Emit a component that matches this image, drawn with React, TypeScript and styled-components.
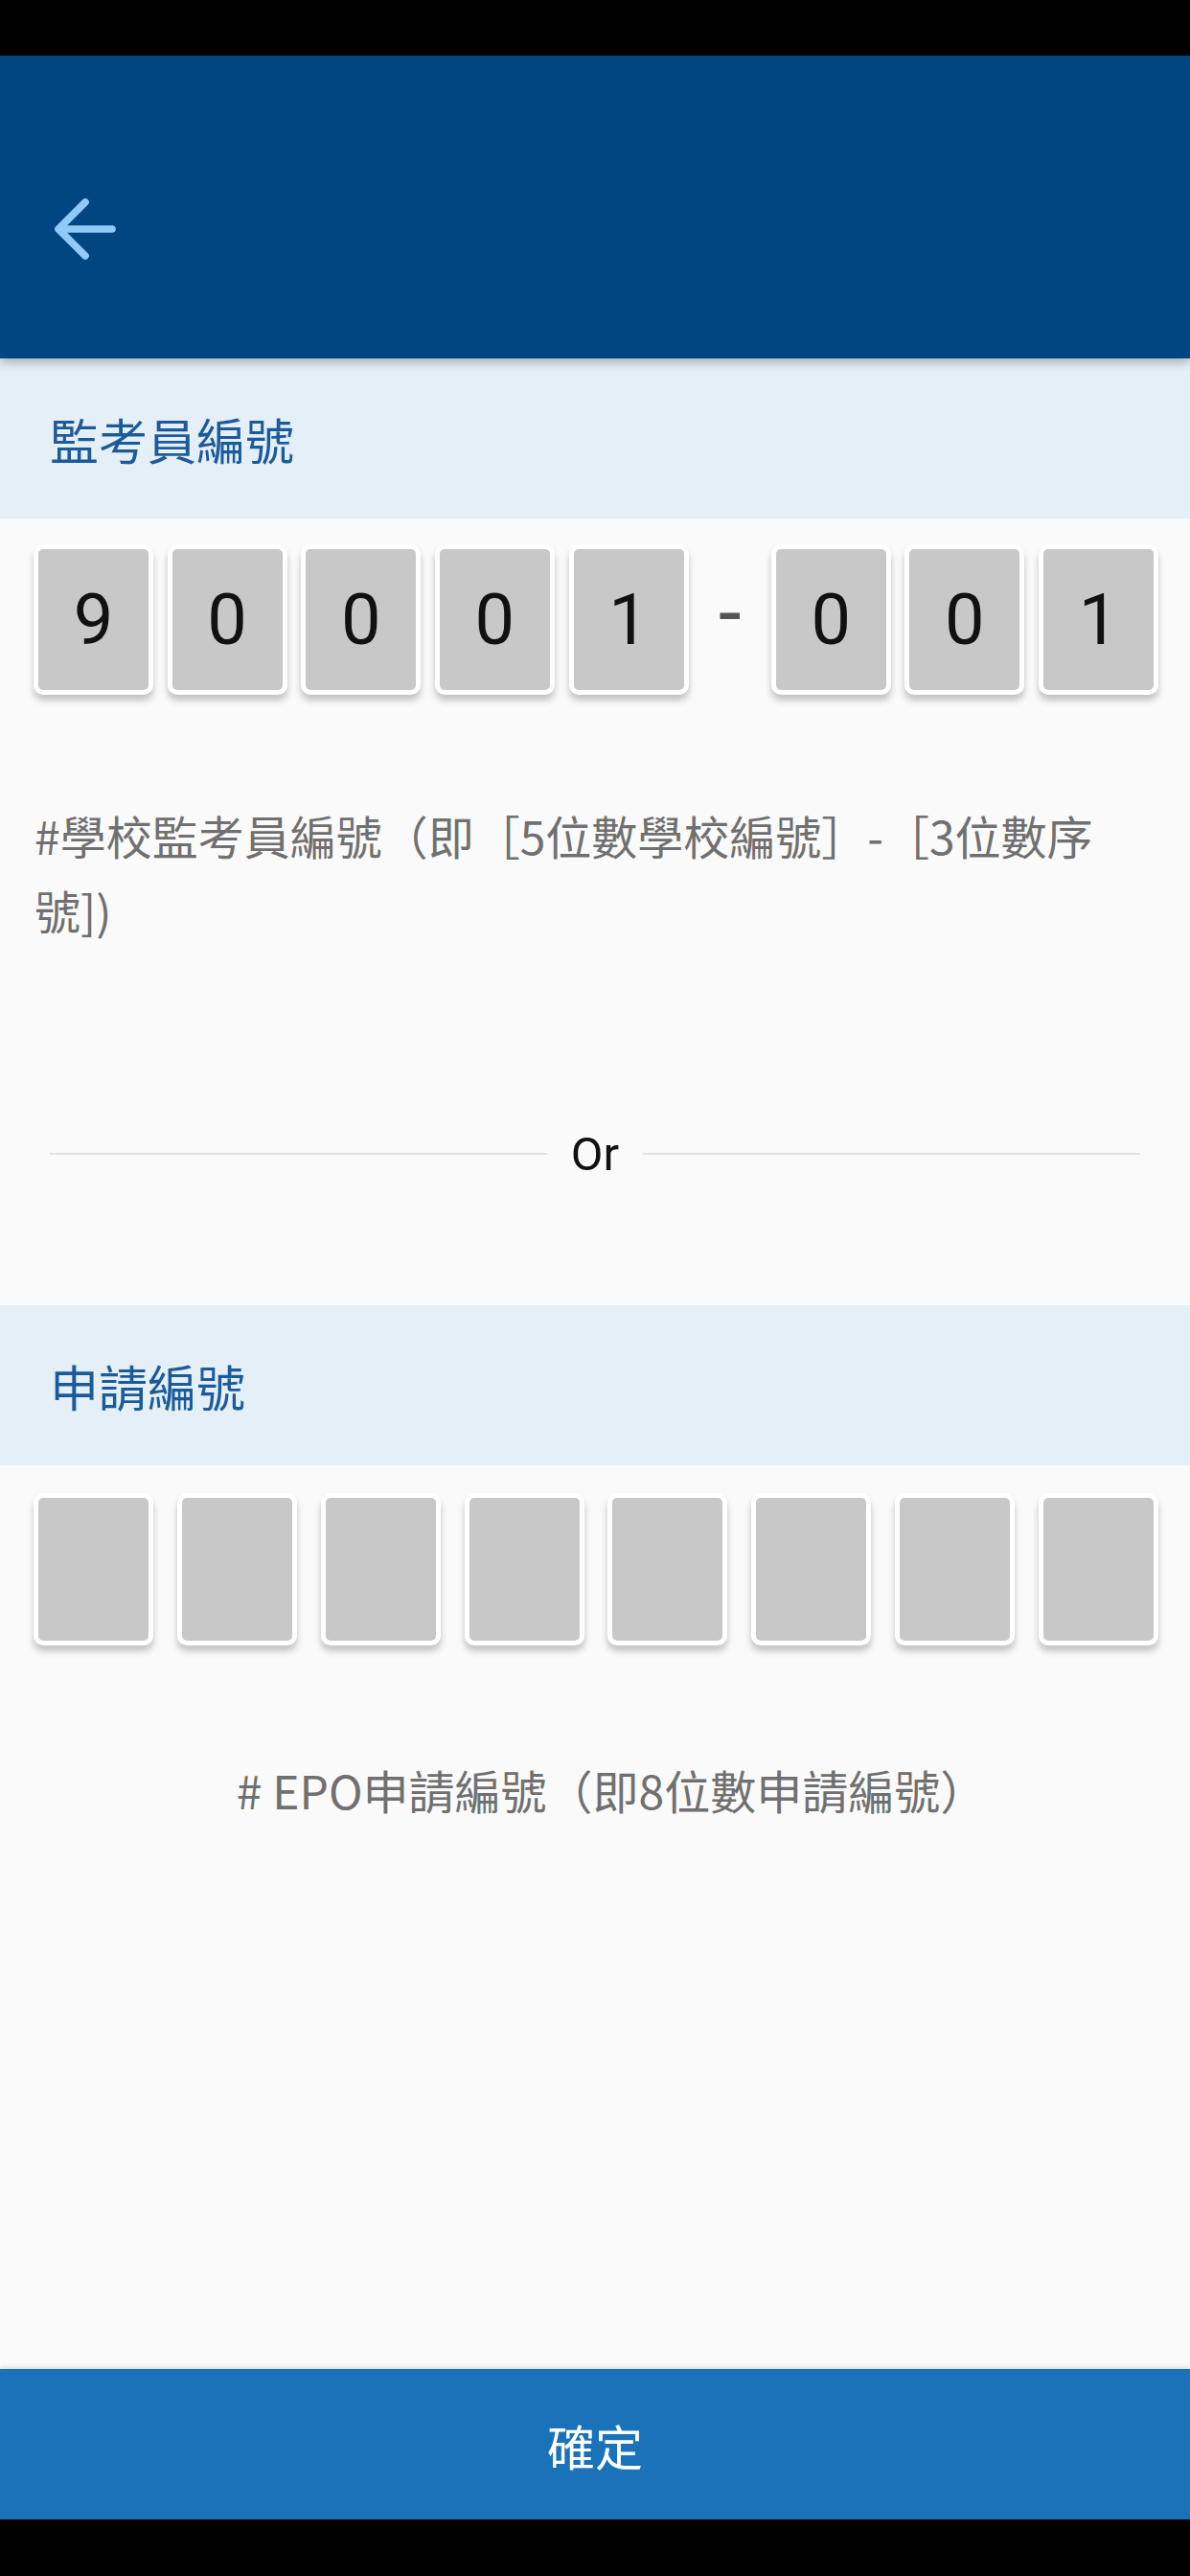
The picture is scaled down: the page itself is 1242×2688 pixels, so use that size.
import React from "react";
import styled, { createGlobalStyle } from "styled-components";

const GlobalStyle = createGlobalStyle`
  html, body {
    margin: 0;
    padding: 0;
    background: #fafafa;
  }
  * { box-sizing: border-box; }
  body {
    font-family: "Noto Sans CJK TC", "Noto Sans", sans-serif;
  }
`;

const Page = styled.div`
  width: 1242px;
  min-height: 2688px;
  display: flex;
  flex-direction: column;
  background: #fafafa;
`;

const StatusBar = styled.div`
  height: 58px;
  background: #000;
  flex-shrink: 0;
`;

const Header = styled.header`
  height: 316px;
  background: #014581;
  padding: 133px 0 0 41px;
  flex-shrink: 0;
  position: relative;
  z-index: 2;
  box-shadow: 0 4px 10px rgba(0, 0, 0, 0.28);
`;

const BackButton = styled.button`
  width: 96px;
  height: 96px;
  padding: 0;
  border: none;
  background: transparent;
  display: flex;
  align-items: center;
  justify-content: center;
  cursor: pointer;
`;

const Content = styled.main`
  flex: 1;
  display: flex;
  flex-direction: column;
`;

const SectionTitle = styled.div<{ $top?: number }>`
  height: 167px;
  margin-top: ${(p) => p.$top ?? 0}px;
  background: #e4eff7;
  display: flex;
  align-items: center;
  padding-left: 52px;
  font-size: 51px;
  color: #1c5b9a;
`;

const CodeRow = styled.div<{ $top: number }>`
  margin-top: ${(p) => p.$top}px;
  padding: 0 33px 0 35px;
  display: flex;
  align-items: center;
  justify-content: space-between;
`;

const DigitBox = styled.div<{ $h: number }>`
  width: 125px;
  height: ${(p) => p.$h}px;
  border: 5px solid #ffffff;
  border-radius: 10px;
  background: #c8c8c8;
  box-shadow: 0 6px 7px rgba(0, 0, 0, 0.22);
  display: flex;
  align-items: center;
  justify-content: center;
  font-family: Roboto, "Liberation Sans", sans-serif;
  font-size: 74px;
  color: #111;
  line-height: 1;
`;

const Dash = styled.div`
  width: 57px;
  display: flex;
  justify-content: center;
  font-family: "Liberation Sans", Arial, sans-serif;
  font-size: 84px;
  line-height: 1;
  color: #555;
  margin-bottom: 22px;
`;

const Helper = styled.p<{ $top: number; $center?: boolean }>`
  margin: ${(p) => p.$top}px 0 0;
  padding: ${(p) => (p.$center ? "0 18px 0 52px" : "0 40px 0 36px")};
  font-size: 48px;
  line-height: 78px;
  color: #707070;
  text-align: ${(p) => (p.$center ? "center" : "left")};
  line-break: strict;
`;

const OrRow = styled.div`
  margin-top: 186px;
  height: 60px;
  padding: 0 52px;
  display: flex;
  align-items: center;
  gap: 25px;
`;

const OrLine = styled.div`
  flex: 1;
  height: 2px;
  background: #e2e2e2;
`;

const OrText = styled.span`
  font-family: Roboto, "Liberation Sans", sans-serif;
  font-size: 49px;
  color: #111;
  line-height: 1;
`;

const ConfirmButton = styled.button`
  height: 157px;
  flex-shrink: 0;
  border: none;
  background: #1a73b9;
  color: #fff;
  font-family: "Noto Sans CJK TC", sans-serif;
  font-size: 50px;
  box-shadow: 0 -2px 4px rgba(0, 0, 0, 0.12);
  cursor: pointer;
`;

const NavBar = styled.div`
  height: 59px;
  background: #000;
  flex-shrink: 0;
`;

const ArrowIcon = () => (
  <svg width="96" height="96" viewBox="0 0 24 24" fill="none">
    <path
      d="M19 12H5M12 19l-7-7 7-7"
      stroke="#90caf9"
      strokeWidth="1.9"
      strokeLinecap="round"
      strokeLinejoin="round"
    />
  </svg>
);

export default function App() {
  const first = ["9", "0", "0", "0", "1"];
  const second = ["0", "0", "1"];
  const app = Array.from({ length: 8 });
  return (
    <>
      <GlobalStyle />
      <Page>
        <StatusBar />
        <Header>
          <BackButton aria-label="back">
            <ArrowIcon />
          </BackButton>
        </Header>
        <Content>
          <SectionTitle>監考員編號</SectionTitle>
          <CodeRow $top={27}>
            {first.map((d, i) => (
              <DigitBox key={"a" + i} $h={157}>
                {d}
              </DigitBox>
            ))}
            <Dash>-</Dash>
            {second.map((d, i) => (
              <DigitBox key={"b" + i} $h={157}>
                {d}
              </DigitBox>
            ))}
          </CodeRow>
          <Helper $top={107}>
            #學校監考員編號（即［5位數學校編號］-［3位數序號])
          </Helper>
          <OrRow>
            <OrLine />
            <OrText>Or</OrText>
            <OrLine />
          </OrRow>
          <SectionTitle $top={128}>申請編號</SectionTitle>
          <CodeRow $top={29}>
            {app.map((_, i) => (
              <DigitBox key={"c" + i} $h={159} />
            ))}
          </CodeRow>
          <Helper $top={111} $center>
            # EPO申請編號（即8位數申請編號）
          </Helper>
        </Content>
        <ConfirmButton>確定</ConfirmButton>
        <NavBar />
      </Page>
    </>
  );
}
